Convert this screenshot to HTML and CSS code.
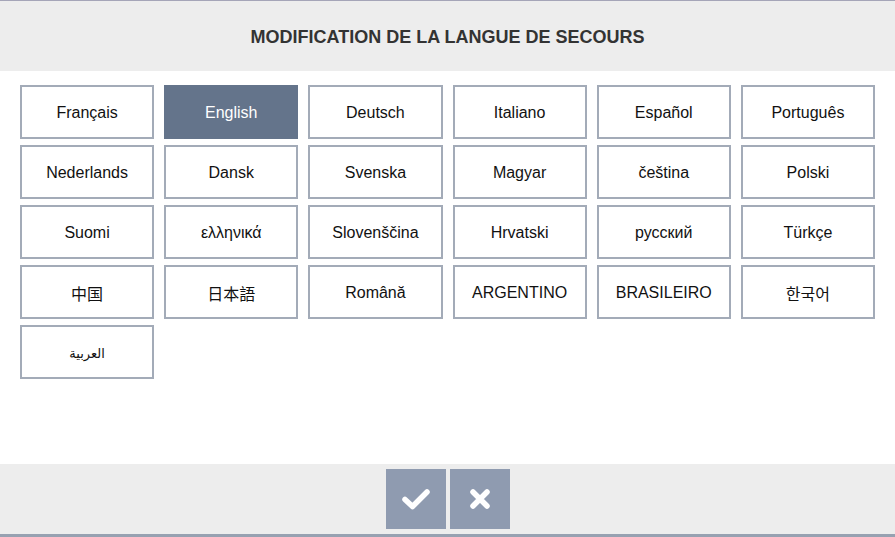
FILE: index.html
```html
<!DOCTYPE html>
<html lang="fr">
<head>
<meta charset="utf-8">
<link rel="stylesheet" href="styles.css">
</head>
<body>
<div class="dialog">
  <header class="head"><h1 class="title">MODIFICATION DE LA LANGUE DE SECOURS</h1></header>
  <main class="body">
    <div class="grid">
      <button class="lang">Français</button>
      <button class="lang selected">English</button>
      <button class="lang">Deutsch</button>
      <button class="lang">Italiano</button>
      <button class="lang">Español</button>
      <button class="lang">Português</button>
      <button class="lang">Nederlands</button>
      <button class="lang">Dansk</button>
      <button class="lang">Svenska</button>
      <button class="lang">Magyar</button>
      <button class="lang">čeština</button>
      <button class="lang">Polski</button>
      <button class="lang">Suomi</button>
      <button class="lang">ελληνικά</button>
      <button class="lang">Slovenščina</button>
      <button class="lang">Hrvatski</button>
      <button class="lang">русский</button>
      <button class="lang">Türkçe</button>
      <button class="lang">中国</button>
      <button class="lang">日本語</button>
      <button class="lang">Română</button>
      <button class="lang">ARGENTINO</button>
      <button class="lang">BRASILEIRO</button>
      <button class="lang">한국어</button>
      <button class="lang arabic">العربية</button>
    </div>
  </main>
  <footer class="foot">
    <button class="action" aria-label="Valider">
      <svg width="28" height="22" viewBox="0 0 28 22"><path d="M3 11.5 L10.5 18.5 L25 4" fill="none" stroke="#fff" stroke-width="5.5" stroke-linecap="round" stroke-linejoin="round"/></svg>
    </button>
    <button class="action" aria-label="Annuler">
      <svg width="22" height="22" viewBox="0 0 22 22"><path d="M4 4 L18 18 M18 4 L4 18" fill="none" stroke="#fff" stroke-width="5.5" stroke-linecap="round"/></svg>
    </button>
  </footer>
</div>
</body>
</html>
```
FILE: styles.css
```css
html, body {
  margin: 0;
  padding: 0;
  background: #ffffff;
}
body {
  font-family: "Liberation Sans", Arial, "Noto Sans CJK SC", sans-serif;
}
.dialog {
  width: 895px;
  height: 537px;
  display: flex;
  flex-direction: column;
  border-top: 1px solid #a5a5b8;
  box-sizing: border-box;
  border-bottom: 3px solid #97a1b1;
}
.head {
  height: 70px;
  background: #ededed;
  display: flex;
  align-items: center;
  justify-content: center;
  padding-top: 2px;
  box-sizing: border-box;
  flex-shrink: 0;
}
.title {
  margin: 0;
  font-size: 18px;
  font-weight: bold;
  color: #333333;
}
.body {
  flex: 1;
  padding: 14px 20px 0 20px;
}
.grid {
  display: grid;
  grid-template-columns: repeat(6, 1fr);
  column-gap: 10px;
  row-gap: 6px;
}
.lang {
  height: 54px;
  background: #ffffff;
  border: 2px solid #a3abb8;
  font-family: "Liberation Sans", Arial, "Noto Sans CJK SC", sans-serif;
  font-size: 16px;
  color: #111111;
  padding: 2px 0 0 0;
  margin: 0;
}
.lang.selected {
  background: #64748b;
  border-color: #64748b;
  color: #ffffff;
}
.lang.arabic {
  font-family: "DejaVu Sans", sans-serif;
  font-size: 13px;
}
.foot {
  height: 70px;
  background: #ededed;
  display: flex;
  justify-content: center;
  gap: 4px;
  padding-top: 5px;
  box-sizing: border-box;
  flex-shrink: 0;
}
.action {
  width: 60px;
  height: 60px;
  background: #8f9bb0;
  border: none;
  padding: 0;
  display: flex;
  align-items: center;
  justify-content: center;
}
```
